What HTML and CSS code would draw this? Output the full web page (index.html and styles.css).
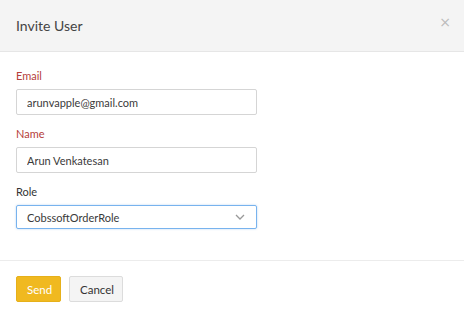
FILE: index.html
```html
<!DOCTYPE html>
<html lang="en">
<head>
    <meta charset="UTF-8">
    <meta name="viewport" content="width=device-width, initial-scale=1.0">
    <title>Invite User</title>
    <link rel="stylesheet" href="styles.css">
</head>
<body>
    <div class="modal">
        <div class="modal-header">
            <h2>Invite User</h2>
            <button class="close-btn">&times;</button>
        </div>

        <div class="modal-body">
            <div class="field">
                <label class="invalid">Email</label>
                <input type="text" value="arunvapple@gmail.com">
            </div>
            <div class="field">
                <label class="invalid">Name</label>
                <input type="text" value="Arun Venkatesan">
            </div>
            <div class="field">
                <label>Role</label>
                <div class="select focused">
                    <span>CobssoftOrderRole</span>
                    <svg width="10" height="6" viewBox="0 0 10 6"><path d="M1 1l4 4 4-4" fill="none" stroke="#999" stroke-width="1.3"/></svg>
                </div>
            </div>
        </div>

        <div class="modal-footer">
            <button class="btn btn-primary">Send</button>
            <button class="btn btn-default">Cancel</button>
        </div>
    </div>
</body>
</html>
```

FILE: styles.css
```css
body {
    margin: 0;
    font-family: 'Lato', 'Open Sans', sans-serif;
    background: white;
    color: #333;
}
.modal { width: 464px; height: 318px; background: white; }
.modal-header {
    height: 52px; background: #f4f4f4; border-bottom: 1px solid #e6e6e6;
    display: flex; align-items: center; justify-content: space-between;
    padding: 0 16px; box-sizing: border-box;
}
.modal-header h2 { margin: 0 0 1px; font-size: 14px; font-weight: normal; color: #444; }
.close-btn {
    background: none; border: none; padding: 0; margin: 0 -3px 8px 0;
    font-size: 14px; color: #bbb; cursor: pointer; line-height: 1;
    font-family: 'DejaVu Sans', sans-serif;
}
.modal-body { padding: 17px 16px 31px; border-bottom: 1px solid #ececec; }
.field { display: flex; flex-direction: column; margin-bottom: 12px; }
.field:last-child { margin-bottom: 0; }
.field label { font-size: 11px; color: #333; margin-bottom: 6px; line-height: 14px; }
.field label.invalid { color: #b5403a; }
.field input, .select {
    width: 241px; height: 26px; box-sizing: border-box;
    border: 1px solid #d5d5d5; border-radius: 2px;
    padding: 0 10px; font-family: inherit; font-size: 11px; color: #3a3a3a;
    outline: none;
}
.select {
    display: flex; align-items: center; justify-content: space-between;
    height: 24px;
}
.select.focused { border-color: #78b3ee; box-shadow: 0 0 2px rgba(100,160,230,0.5); }
.select svg { margin-right: 1px; }
.modal-footer { display: flex; gap: 8px; padding: 15px 16px; }
.btn {
    height: 26px; padding: 0 10px; border-radius: 2px; font-family: inherit;
    font-size: 11.5px; cursor: pointer;
}
.btn-primary { background: #f0b920; border: 1px solid #e6b01a; color: white; width: 45px; }
.btn-default { background: #f4f4f4; border: 1px solid #dcdcdc; color: #333; width: 54px; }
```
